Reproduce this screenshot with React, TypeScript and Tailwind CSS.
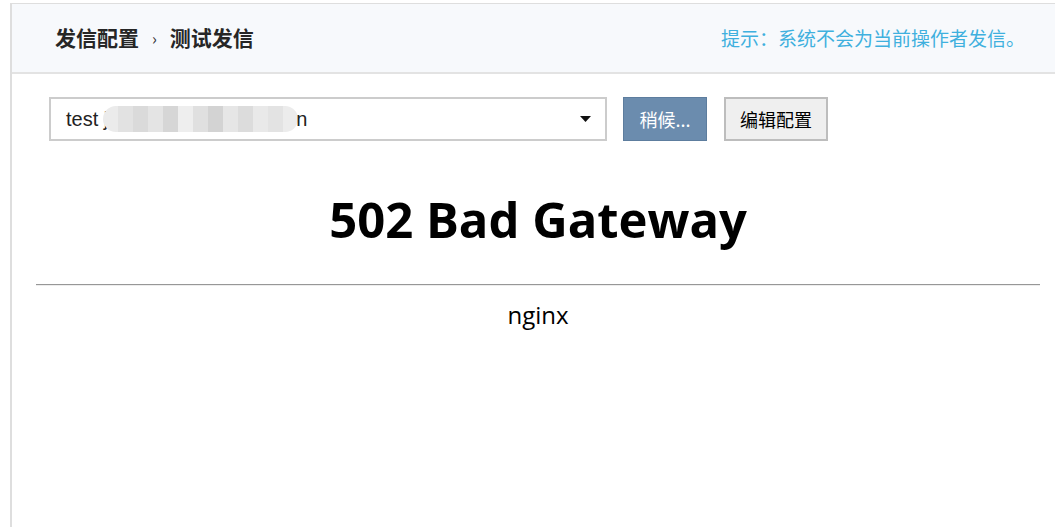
import React from "react";

const cjk = { fontFamily: '"Noto Sans CJK SC", "Noto Sans", sans-serif' };
const arial = {
  fontFamily: '"Liberation Sans", Arial, "Noto Sans CJK SC", sans-serif',
};
const page = { fontFamily: '"Open Sans", "Noto Sans", sans-serif' };

// censored part of the address, drawn as grey mosaic blocks
const mosaic = [
  "#ebebeb", "#e2e2e2", "#dadada", "#e4e4e4", "#d6d6d6", "#eeeeee",
  "#e0e0e0", "#d3d3d3", "#e6e6e6", "#dcdcdc", "#e9e9e9", "#e3e3e3",
  "#ececec",
];

export default function App() {
  return (
    <div className="w-[1055px] h-[527px] bg-white pt-[3px] pl-[10px] overflow-hidden">
      <div className="h-full border-l-2 border-t border-[#dedede] bg-white flex flex-col">
        <div
          className="h-[70px] shrink-0 bg-[#f7f9fc] border-b-2 border-[#e3e3e3] flex items-center justify-between pl-[43px] pr-[30px]"
          style={cjk}
        >
          <div className="flex items-center text-[21px] font-bold text-[#262626]">
            <span>发信配置</span>
            <span className="mx-[13px] text-[16px] font-normal text-[#333]">›</span>
            <span>测试发信</span>
          </div>
          <div className="text-[19px] text-[#3fb0de]">提示：系统不会为当前操作者发信。</div>
        </div>

        <div className="flex items-center pl-[37px] pt-[23px]">
          <div className="w-[558px] h-[44px] border-2 border-[#cccccc] bg-white flex items-center justify-between pl-[15px] pr-[14px]">
            <div className="flex items-center text-[20px] text-[#222]" style={arial}>
              <span>test j</span>
              <span className="flex h-[26px] ml-[-5px] rounded-full overflow-hidden">
                {mosaic.map((c, i) => (
                  <span
                    key={i}
                    className="w-[15px] h-full"
                    style={{ backgroundColor: c }}
                  />
                ))}
              </span>
              <span className="ml-[-2px]">n</span>
            </div>
            <svg width="11" height="6" viewBox="0 0 11 6">
              <path d="M0 0h11L5.5 6z" fill="#111" />
            </svg>
          </div>
          <button
            className="ml-[16px] w-[84px] h-[44px] bg-[#6b8cae] border border-[#5d7d9e] text-white text-[18px] flex items-center justify-center"
            style={cjk}
          >
            稍候...
          </button>
          <button
            className="ml-[17px] w-[104px] h-[44px] bg-[#efefef] border-2 border-[#bdbdbd] text-black text-[18px] flex items-center justify-center"
            style={cjk}
          >
            编辑配置
          </button>
        </div>

        <div className="ml-[24px] mr-[15px] flex flex-col items-center text-black" style={page}>
          <h1 className="mt-[48px] text-[49px] leading-[60px] font-bold">502 Bad Gateway</h1>
          <div className="w-full mt-[35px] border-t border-[#979797] border-b border-b-[#ededed]" />
          <div className="mt-[14px] text-[24px] leading-[30px]">nginx</div>
        </div>
      </div>
    </div>
  );
}
